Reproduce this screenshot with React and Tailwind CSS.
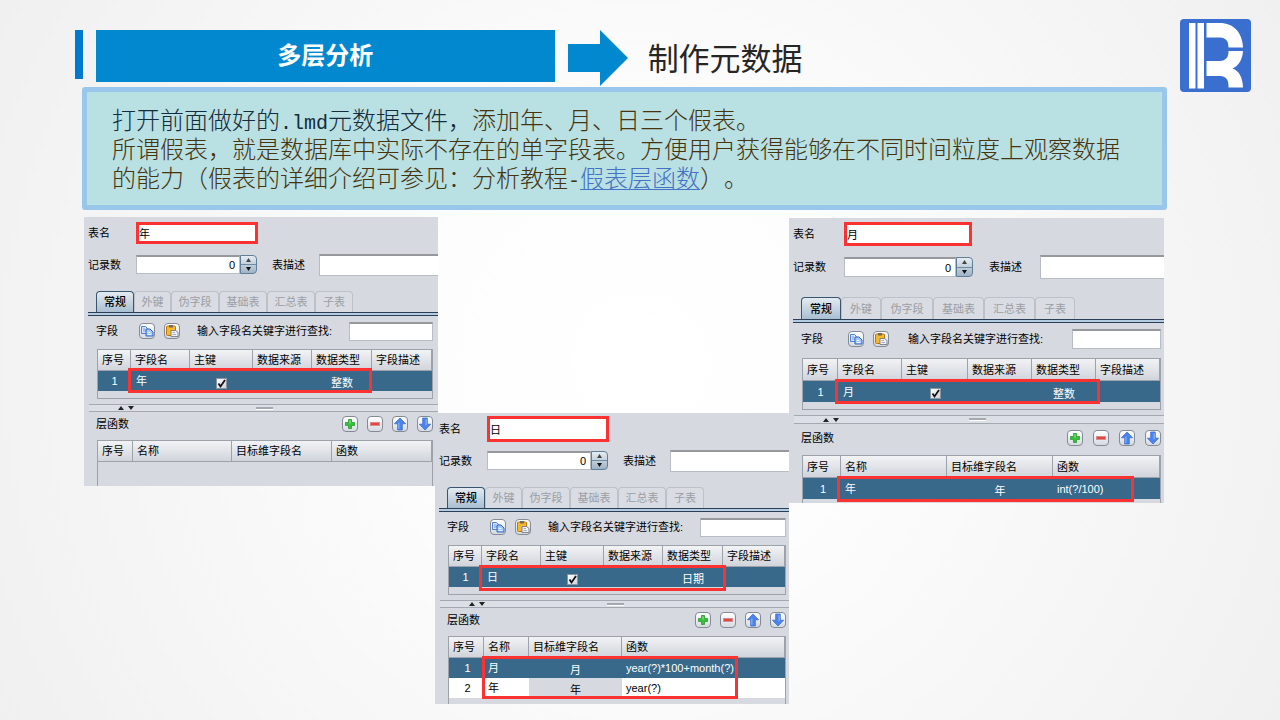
import React from 'react';
import clsx from 'clsx';

const sizes = {
  normal: {
    label: 'w-[52px]',
    nameInput: 'w-[122px]',
    countRow: 'h-[31px]',
    countInput: 'w-[104px] h-[19px]',
    spinner: 'h-[19px]',
    descLabel: 'ml-[15px] w-[47px]',
    descInput: 'h-[22px]',
    tabs: 'pt-[11px]',
    tab: 'h-[21px]',
    tabWidths: ['w-[38px]', 'w-[37px]', 'w-[48px]', 'w-[48px]', 'w-[48px]', 'w-[38px]'],
    toolbar: 'h-[33px]',
    toolLabel: 'w-[43px]',
    searchLabel: 'ml-[17px] w-[152px]',
    searchInput: 'h-[19px]',
    head: 'h-[21px]',
    row: 'h-[20px]',
    splitter: 'h-[8px]',
    layerBar: 'h-[28px] gap-[9px]',
    fieldCols: ['w-[33px]', 'w-[59px]', 'w-[63px]', 'w-[59px]', 'w-[60px]', ''],
  },
  large: {
    label: 'w-[55px]',
    nameInput: 'w-[128px]',
    countRow: 'h-[34px]',
    countInput: 'w-[112px] h-[20px]',
    spinner: 'h-[20px]',
    descLabel: 'ml-[16px] w-[51px]',
    descInput: 'h-[24px]',
    tabs: 'pt-[13px]',
    tab: 'h-[22px]',
    tabWidths: ['w-[40px]', 'w-[40px]', 'w-[52px]', 'w-[51px]', 'w-[51px]', 'w-[40px]'],
    toolbar: 'h-[35px]',
    toolLabel: 'w-[47px]',
    searchLabel: 'ml-[19px] w-[164px]',
    searchInput: 'h-[20px]',
    head: 'h-[22px]',
    row: 'h-[21px]',
    splitter: 'h-[9px]',
    layerBar: 'h-[31px] gap-[10px]',
    fieldCols: ['w-[35px]', 'w-[64px]', 'w-[66px]', 'w-[64px]', 'w-[64px]', ''],
  },
};

const panels = [
  {
    id: 'year',
    name: '年',
    type: '整数',
    size: 'normal',
    box: 'flex-[354_1_0] h-[269px]',
    gutter: 'mr-[5px]',
    nameHeight: 'h-[22px]',
    mark: 'left-[30px] top-[18px] w-[244px] h-[25px]',
    layerCols: ['w-[35px]', 'w-[99px]', 'w-[100px]', ''],
    layers: [],
  },
  {
    id: 'day',
    name: '日',
    type: '日期',
    size: 'normal',
    box: 'flex-[354_1_0] h-[291px] mt-[196px] -ml-[3px]',
    gutter: 'mr-[3px]',
    nameHeight: 'h-[26px]',
    mark: 'left-[30px] top-[19px] w-[247px] h-[26px]',
    layerCols: ['w-[35px]', 'w-[45px]', 'w-[93px]', ''],
    layers: [
      { name: '月', target: '月', fn: 'year(?)*100+month(?)', selected: true },
      { name: '年', target: '年', fn: 'year(?)' },
    ],
    layerMark: 'left-[33px] top-[19px] w-[256px] h-[43px]',
  },
  {
    id: 'month',
    name: '月',
    type: '整数',
    size: 'large',
    box: 'flex-[375_1_0] h-[285px] mt-px',
    gutter: 'mr-[3px]',
    nameHeight: 'h-[24px]',
    mark: 'left-[32px] top-[20px] w-[265px] h-[25px]',
    layerCols: ['w-[38px]', 'w-[106px]', 'w-[106px]', ''],
    layers: [{ name: '年', target: '年', fn: 'int(?/100)', selected: true }],
    layerMark: 'left-[34px] top-[20px] w-[297px] h-[26px]',
  },
];

const tabNames = ['常规', '外键', '伪字段', '基础表', '汇总表', '子表'];
const fieldHeads = ['序号', '字段名', '主键', '数据来源', '数据类型', '字段描述'];
const layerHeads = ['序号', '名称', '目标维字段名', '函数'];

const sunken = 'bg-white border border-[#b8bcc4] border-t-2 border-t-[#96989c] outline-none';

function IconButton({ label, children }) {
  return (
    <button
      aria-label={label}
      className="w-4 h-4 shrink-0 flex items-center justify-center rounded-[4px] border border-[#858b94] bg-linear-to-b from-white to-[#d5dae2]"
    >
      {children}
    </button>
  );
}

function CopyIcon() {
  return (
    <svg viewBox="0 0 14 14" className="w-3.5 h-3.5 shrink-0">
      <path d="M1.500 2.500h4l2 2v5h-6z" fill="#d4e5ff" stroke="#4a80d8" />
      <path d="M3 5h2M3 7h3" stroke="#5a8cdb" strokeWidth=".8" />
      <path d="M6 5h4l3 3v4h-7z" fill="#a5c8fb" stroke="#2f66c4" />
      <path d="M7.500 8.500h3M7.500 10.500h4" stroke="#fff" strokeWidth=".8" />
    </svg>
  );
}

function PasteIcon() {
  return (
    <svg viewBox="0 0 14 14" className="w-3.5 h-3.5 shrink-0">
      <rect x="1.500" y="2" width="9" height="9.500" rx="1" fill="#f5b92e" stroke="#b87811" />
      <rect x="4" y="1" width="4" height="2.500" fill="#75695a" />
      <path d="M6 6.500h4.500l2.500 2v4H6z" fill="#eef3fb" stroke="#6b6f7a" strokeWidth=".8" />
      <path d="M7.500 8.500h2.500M7.500 10.500h3.500" stroke="#8c9cba" strokeWidth=".8" />
    </svg>
  );
}

function PlusIcon() {
  return (
    <svg viewBox="0 0 12 12" className="w-3 h-3">
      <path d="M4.500 1.500h3v3h3v3h-3v3h-3v-3h-3v-3h3z" fill="#35c23a" stroke="#2a9a2f" strokeWidth=".8" />
      <path d="M5.500 2.500h1v3h-1z" fill="#a0eb9c" />
    </svg>
  );
}

function MinusIcon() {
  return (
    <svg viewBox="0 0 12 12" className="w-3 h-3">
      <rect x="1.500" y="4.500" width="9" height="3" fill="#e4473f" stroke="#d98a8e" />
    </svg>
  );
}

function ArrowIcon({ down }) {
  return (
    <svg viewBox="0 0 12 12" className={clsx('w-3.5 h-3.5 shrink-0', down && 'rotate-180')}>
      <path d="M6 .8 10.800 5.800H8v5.400H4V5.800H1.200z" fill="#4a84f0" stroke="#3a66c8" strokeWidth=".6" />
      <path d="M5 5v5" stroke="#8ab4fb" />
    </svg>
  );
}

function Mark({ className }) {
  return <div className={clsx('absolute border-3 border-[#fa3232] pointer-events-none', className)} />;
}

function HeadRow({ heads, cols, height }) {
  return (
    <thead>
      <tr className={clsx('bg-linear-to-b from-[#f2f3f5] to-[#cfd3da]', height)}>
        {heads.map((h, i) => (
          <th
            key={h}
            className={clsx(
              'p-0 pl-[4px] text-left font-normal whitespace-nowrap border-b border-r border-[#9ca1aa]',
              cols[i]
            )}
          >
            {h}
          </th>
        ))}
      </tr>
    </thead>
  );
}

function FieldTable({ panel, s }) {
  return (
    <div className={clsx('relative ml-[13px] pb-[7px] border border-[#9ca1aa]', panel.gutter)}>
      <table className="w-full table-fixed border-separate border-spacing-0">
        <HeadRow heads={fieldHeads} cols={s.fieldCols} height={s.head} />
        <tbody>
          <tr className={clsx('bg-[#38698b] text-white', s.row)}>
            <td className="p-0 text-center">1</td>
            <td className="p-0 pl-[5px]">{panel.name}</td>
            <td className="p-0">
              <label className="relative mx-auto mt-[4px] block w-[11px] h-[11px]">
                <input
                  type="checkbox"
                  defaultChecked
                  aria-label="主键"
                  className="block appearance-none w-[11px] h-[11px] bg-linear-to-br from-white to-[#cbd3dd] border border-[#8c959e]"
                />
                <svg viewBox="0 0 11 11" className="absolute inset-0 pointer-events-none">
                  <path d="M2.500 5.500 4.500 8.500 9 2" fill="none" stroke="#111" strokeWidth="1.800" />
                </svg>
              </label>
            </td>
            <td className="p-0" />
            <td className="p-0 pt-[4px] text-center">{panel.type}</td>
            <td className="p-0" />
          </tr>
        </tbody>
      </table>
      <Mark className={panel.mark} />
    </div>
  );
}

function LayerTable({ panel, s }) {
  return (
    <div className={clsx('relative flex-1 ml-[13px] border border-b-0 border-[#9ca1aa]', panel.gutter)}>
      <table className="w-full table-fixed border-separate border-spacing-0">
        <HeadRow heads={layerHeads} cols={panel.layerCols} height={s.head} />
        <tbody>
          {panel.layers.map((l, i) => (
            <tr key={l.name} className={clsx(s.row, l.selected ? 'bg-[#38698b] text-white' : 'bg-white text-black')}>
              <td className="p-0 pl-[2px] text-center">{i + 1}</td>
              <td className="p-0 pl-[4px]">{l.name}</td>
              <td className={clsx('p-0 pt-[4px] text-center', !l.selected && 'bg-[#d6d9e0]')}>{l.target}</td>
              <td className="p-0 pl-[4px] whitespace-nowrap">{l.fn}</td>
            </tr>
          ))}
        </tbody>
      </table>
      {panel.layerMark && <Mark className={panel.layerMark} />}
    </div>
  );
}

function TablePanel({ panel }) {
  const s = sizes[panel.size];
  const nameId = `${panel.id}-name`;
  const countId = `${panel.id}-count`;
  const descId = `${panel.id}-desc`;
  const searchId = `${panel.id}-search`;

  return (
    <section
      className={clsx(
        'relative min-w-0 overflow-hidden flex flex-col bg-[#d6d9e0] text-black text-[11px] leading-[14px]',
        panel.box
      )}
    >
      {/* Name */}
      <div className="h-[32px] shrink-0 flex items-center">
        <label htmlFor={nameId} className={clsx('pl-[4px] shrink-0', s.label)}>表名</label>
        <input
          id={nameId}
          defaultValue={panel.name}
          className={clsx('bg-white border-3 border-[#fa3232] outline-none', s.nameInput, panel.nameHeight)}
        />
      </div>

      {/* Record count and description */}
      <div className={clsx('shrink-0 flex items-center', s.countRow)}>
        <label htmlFor={countId} className={clsx('pl-[4px] shrink-0', s.label)}>记录数</label>
        <input id={countId} defaultValue="0" className={clsx('pr-[4px] text-right shrink-0', sunken, s.countInput)} />
        <div
          className={clsx(
            'w-[17px] shrink-0 flex flex-col rounded-r-[4px] border border-[#5f7f99] bg-linear-to-b from-[#e6ecf2] to-[#9fb3c6]',
            s.spinner
          )}
        >
          <button aria-label="增加" className="flex-1 flex items-center justify-center border-b border-[#6f8ca5]">
            <svg viewBox="0 0 5 4" className="w-[5px] h-[4px]"><path d="M2.500 0 5 4H0z" fill="#444" /></svg>
          </button>
          <button aria-label="减少" className="flex-1 flex items-center justify-center">
            <svg viewBox="0 0 5 4" className="w-[5px] h-[4px]"><path d="M0 0h5L2.500 4z" fill="#111" /></svg>
          </button>
        </div>
        <label htmlFor={descId} className={clsx('shrink-0', s.descLabel)}>表描述</label>
        <input id={descId} className={clsx('flex-1 min-w-0 border-r-0', sunken, s.descInput)} />
      </div>

      {/* Tabs */}
      <div className={clsx('shrink-0 pl-[4px]', s.tabs)}>
        <div className="flex pl-[8px]">
          {tabNames.map((t, i) => (
            <button
              key={t}
              className={clsx(
                'shrink-0 rounded-t-[4px] border border-b-0 whitespace-nowrap',
                s.tab,
                s.tabWidths[i],
                i === 0
                  ? 'font-medium border-[#38566f] bg-linear-to-b from-[#e4ebf1] to-[#a9bfd2]'
                  : 'text-[#9b9ea5] border-[#bdc1c8] bg-[#d9dce2]'
              )}
            >
              {t}
            </button>
          ))}
        </div>
        <div className="h-[4px] bg-[#b4cce0] border-y border-[#2d3f56]" />
      </div>

      {/* Field toolbar */}
      <div className={clsx('shrink-0 flex items-center pb-[3px] pl-[12px]', s.toolbar)}>
        <span className={clsx('shrink-0', s.toolLabel)}>字段</span>
        <div className="flex gap-[9px]">
          <IconButton label="复制"><CopyIcon /></IconButton>
          <IconButton label="粘贴"><PasteIcon /></IconButton>
        </div>
        <label htmlFor={searchId} className={clsx('shrink-0 whitespace-nowrap', s.searchLabel)}>
          输入字段名关键字进行查找:
        </label>
        <input id={searchId} className={clsx('flex-1 min-w-0', sunken, s.searchInput, panel.gutter)} />
      </div>

      <FieldTable panel={panel} s={s} />

      {/* Splitter */}
      <div
        className={clsx(
          'shrink-0 mt-[5px] ml-[5px] flex items-center border-y border-[#a4a8b0] bg-[#dcdfe5]',
          s.splitter
        )}
      >
        <svg viewBox="0 0 16 4" className="ml-[29px] w-[16px] h-[4px]">
          <path d="M0 4h6L3 0zM10 0h6l-3 4z" fill="#222" />
        </svg>
        <div className="ml-[35%] w-[17px] h-[3px] border-t-2 border-[#a4a8b0] bg-white" />
      </div>

      {/* Layer functions */}
      <div className={clsx('shrink-0 flex items-center pb-[4px] pl-[12px]', s.layerBar)}>
        <span className="mr-auto">层函数</span>
        <IconButton label="添加"><PlusIcon /></IconButton>
        <IconButton label="删除"><MinusIcon /></IconButton>
        <IconButton label="上移"><ArrowIcon /></IconButton>
        <div className={clsx('flex', panel.gutter)}>
          <IconButton label="下移"><ArrowIcon down /></IconButton>
        </div>
      </div>

      <LayerTable panel={panel} s={s} />
    </section>
  );
}

function Logo() {
  return (
    <svg viewBox="0 0 71 73" className="ml-auto w-[71px] h-[73px] shrink-0">
      <rect width="71" height="73" rx="4" fill="#3b6fcf" />
      <path d="M9 4h6.500v65.500H9zM17.500 4h6.500v65.500h-6.500z" fill="#fff" />
      <path d="M26.500 4H40C53 4 62.500 13 63 28.500H48.500C48.500 22 46 19 40 18.500H26.500z" fill="#fff" />
      <path d="M48.500 32H63C62.500 40 59 46.500 52.500 49.500C59 52 62.500 58 63 68.500H48.500C48.500 61 47 57.500 40 57H26.500V42H40C46 41.500 48.500 38.500 48.500 32z" fill="#fff" />
    </svg>
  );
}

export default function App() {
  return (
    <main className="min-h-screen pb-4 bg-[radial-gradient(circle_at_50%_50%,#ffffff_0%,#fdfdfd_30%,#f0f0f0_100%)] font-['Liberation_Sans','Noto_Sans_CJK_SC',sans-serif]">
      {/* Title bar */}
      <header className="flex items-start h-[87px] pt-[19px] pl-[75px] pr-[29px]">
        <div className="mt-[11px] w-2 h-[49px] shrink-0 bg-[#0078d0]" />
        <h1 className="mt-[11px] ml-[13px] w-[39%] h-[52px] flex items-center justify-center bg-[#0288ce] text-white text-2xl font-bold">
          多层分析
        </h1>
        <svg viewBox="0 0 60 56" className="mt-[11px] ml-[13px] w-[60px] h-[56px] shrink-0">
          <path d="M0 14h32V0l28 28-28 28V42H0z" fill="#0288ce" />
        </svg>
        <h2 className="mt-[18px] ml-5 text-[31px] leading-[46px] text-[#262626]">制作元数据</h2>
        <Logo />
      </header>

      {/* Description */}
      <div className="ml-[82px] mr-[113px] px-[25px] pt-[14px] pb-[12px] rounded-[3px] border-5 border-[#99c7ec] bg-[#b9e0e3] text-2xl leading-[29px] font-light text-[#46340f] [text-spacing-trim:space-all]">
        <p>
          <span className="text-[#142c3c]">
            打开前面做好的<span className="font-['Liberation_Mono',monospace] text-xl leading-[16px]">.lmd</span>元数据文件，
          </span>
          添加年、月、日三个假表。
        </p>
        <p>
          所谓假表，就是数据库中实际不存在的单字段表。方便用户获得能够在不同时间粒度上观察数据的能力（假表的详细介绍可参见：分析教程<span className="font-['Liberation_Mono',monospace] text-xl leading-[16px]">-</span><a href="#" className="text-[#4472c4] underline decoration-1 underline-offset-2">假表层函数</a>）。
        </p>
      </div>

      {/* Table panels */}
      <div className="flex items-start mt-[7px] pl-[84px] pr-[116px]">
        {panels.map((p) => (
          <TablePanel key={p.id} panel={p} />
        ))}
      </div>
    </main>
  );
}
